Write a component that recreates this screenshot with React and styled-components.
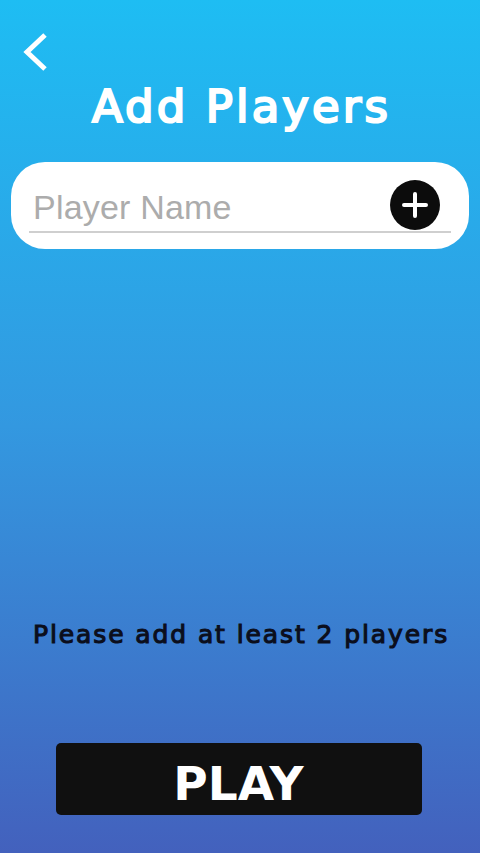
import React from "react";
import styled, { createGlobalStyle } from "styled-components";

const GlobalStyle = createGlobalStyle`
  html, body {
    margin: 0;
    padding: 0;
  }
  body {
    font-family: "Liberation Sans", Arial, sans-serif;
  }
  * {
    box-sizing: border-box;
  }
`;

const Screen = styled.div`
  display: flex;
  flex-direction: column;
  width: 100%;
  height: 853px;
  background: linear-gradient(180deg, #1ebdf3 0%, #3398e0 50%, #4361bd 100%);
  overflow: hidden;
`;

const TopBar = styled.div`
  display: flex;
  padding: 32px 0 0 22px;
`;

const BackButton = styled.button`
  display: flex;
  padding: 0;
  border: none;
  background: none;
  cursor: pointer;
`;

const Title = styled.h1`
  margin: 8px 0 0;
  padding-left: 3px;
  font-family: "DejaVu Sans", Verdana, sans-serif;
  font-size: 45px;
  line-height: 54px;
  font-weight: 400;
  letter-spacing: 3.1px;
  color: #ffffff;
  -webkit-text-stroke: 2.2px #ffffff;
  text-align: center;
`;

const Card = styled.div`
  margin: 28px 11px 0;
  height: 87px;
  padding: 18px 18px 0;
  border-radius: 34px;
  background: #ffffff;
`;

const Field = styled.div`
  display: flex;
  align-items: flex-start;
  border-bottom: 2px solid #cfcfcf;
  height: 53px;
`;

const NameInput = styled.input`
  flex: 1;
  min-width: 0;
  height: 51px;
  padding: 3px 0 0 4px;
  border: none;
  outline: none;
  background: transparent;
  font-family: "Liberation Sans", Arial, sans-serif;
  font-size: 34px;
  letter-spacing: 0.2px;
  color: #333;

  &::placeholder {
    color: #acacac;
  }
`;

const AddButton = styled.button`
  display: flex;
  align-items: center;
  justify-content: center;
  width: 50px;
  height: 50px;
  margin-right: 11px;
  padding: 0;
  border: none;
  border-radius: 50%;
  background: #0c0c0c;
  cursor: pointer;
`;

const Spacer = styled.div`
  flex: 1;
`;

const Hint = styled.p`
  margin: 0;
  padding-left: 2px;
  font-family: "DejaVu Sans", Verdana, sans-serif;
  font-size: 25px;
  line-height: 28px;
  font-weight: 400;
  letter-spacing: 1.9px;
  color: #0b0e1c;
  -webkit-text-stroke: 1.1px #0b0e1c;
  text-align: center;
`;

const PlayButton = styled.button`
  align-self: center;
  width: 366px;
  height: 72px;
  margin: 94px 0 38px -3px;
  padding: 8px 0 0;
  border: none;
  border-radius: 5px;
  background: #101010;
  font-family: "DejaVu Sans", Verdana, sans-serif;
  font-size: 47px;
  font-weight: 700;
  color: #ffffff;
  cursor: pointer;
`;

const ChevronLeft = () => (
  <svg width="30" height="40" viewBox="0 0 30 40">
    <polyline
      points="23,3 5,20 23,37"
      fill="none"
      stroke="#ffffff"
      strokeWidth="5"
      strokeLinejoin="miter"
    />
  </svg>
);

const Plus = () => (
  <svg width="28" height="28" viewBox="0 0 28 28">
    <path
      d="M14 3 V25 M3 14 H25"
      stroke="#ffffff"
      strokeWidth="4"
      strokeLinecap="round"
    />
  </svg>
);

export default function App() {
  return (
    <>
      <GlobalStyle />
      <Screen>
        <TopBar>
          <BackButton aria-label="Back">
            <ChevronLeft />
          </BackButton>
        </TopBar>
        <Title>Add Players</Title>
        <Card>
          <Field>
            <NameInput placeholder="Player Name" />
            <AddButton aria-label="Add player">
              <Plus />
            </AddButton>
          </Field>
        </Card>
        <Spacer />
        <Hint>Please add at least 2 players</Hint>
        <PlayButton>PLAY</PlayButton>
      </Screen>
    </>
  );
}
